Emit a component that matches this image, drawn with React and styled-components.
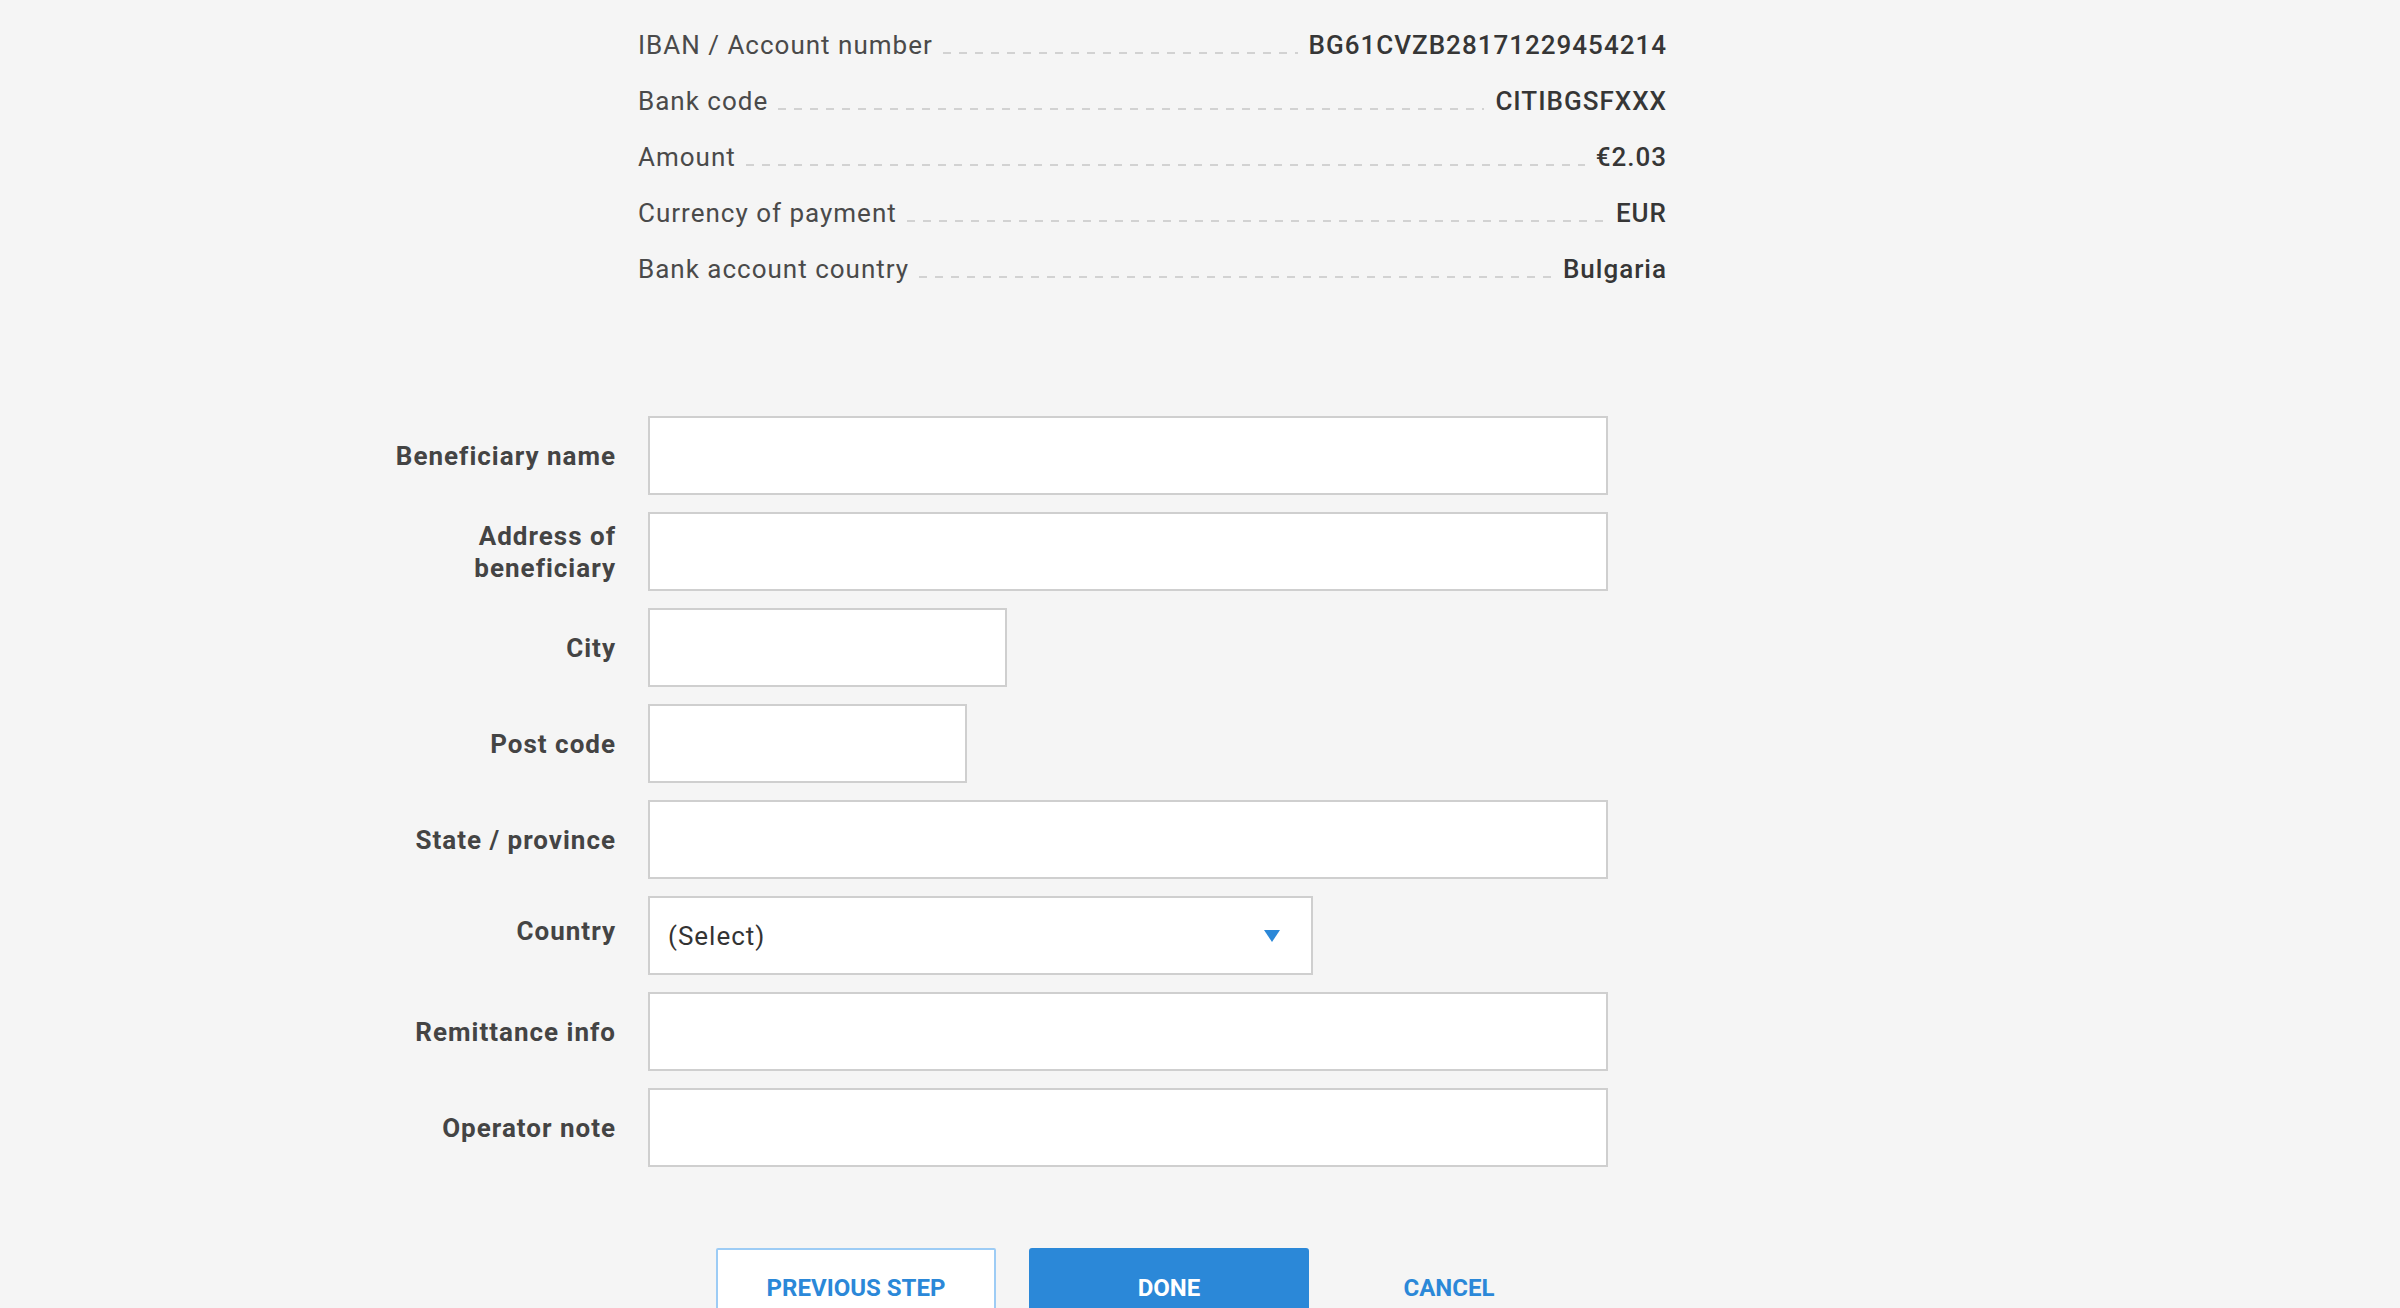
import React from 'react';
import styled, { createGlobalStyle } from 'styled-components';

const GlobalStyle = createGlobalStyle`
  html, body {
    margin: 0;
    padding: 0;
    background: #f5f5f5;
    overflow: hidden;
  }
  body {
    font-family: Roboto, "Noto Sans", "Liberation Sans", Arial, sans-serif;
    color: #444;
  }
  * { box-sizing: border-box; }
`;

const Page = styled.div`
  height: 1308px;
  padding: 17px 0 0 375px;
`;

const InfoList = styled.dl`
  margin: 0 0 0 263px;
  width: 1028px;
`;

const InfoRow = styled.div`
  display: flex;
  align-items: baseline;
  height: 56px;
  line-height: 56px;
  font-size: 26px;
  letter-spacing: 1px;
`;

const InfoLabel = styled.dt`
  margin: 0;
  color: #4a4a4a;
  white-space: nowrap;
`;

const Leader = styled.span`
  flex: 1;
  height: 2px;
  margin: 0 11px -1px 10px;
  background: repeating-linear-gradient(
    to right,
    #d2d2d2 0 8px,
    transparent 8px 16px
  );
`;

const InfoValue = styled.dd`
  margin: 0;
  font-weight: 500;
  color: #363636;
  white-space: nowrap;
  margin-right: -1px;
`;

const Form = styled.form`
  display: grid;
  grid-template-columns: 240px 960px;
  column-gap: 33px;
  row-gap: 17px;
  align-items: center;
  margin-top: 119px;
`;

const FieldLabel = styled.label`
  text-align: right;
  font-weight: 700;
  font-size: 26px;
  line-height: 32px;
  letter-spacing: 1px;
  margin-right: -1px;
  color: #444;
  margin-top: ${p => p.$shift || 0}px;
`;

const TextInput = styled.input`
  display: block;
  width: ${p => p.$w || 960}px;
  height: 79px;
  border: 2px solid #cfcfcf;
  border-radius: 0;
  background: #fff;
  padding: 0 18px;
  font: 400 26px Roboto, "Noto Sans", sans-serif;
  letter-spacing: 1px;
  color: #333;
  outline: none;
`;

const SelectBox = styled.div`
  position: relative;
  width: ${p => p.$w}px;
  height: 79px;
`;

const Select = styled.select`
  appearance: none;
  -webkit-appearance: none;
  width: 100%;
  height: 100%;
  border: 2px solid #cfcfcf;
  border-radius: 0;
  background: #fff;
  padding: 0 60px 0 18px;
  font: 400 26px Roboto, "Noto Sans", sans-serif;
  letter-spacing: 1px;
  color: #333;
  outline: none;
`;

const Arrow = styled.svg`
  position: absolute;
  right: 33px;
  top: 34px;
  pointer-events: none;
`;

const Actions = styled.div`
  display: flex;
  gap: 33px;
  margin: 81px 0 0 341px;
`;

const Button = styled.button`
  width: ${p => (p.$variant === 'text' ? 214 : 280)}px;
  height: 79px;
  font: 700 24px Roboto, "Noto Sans", sans-serif;
  text-transform: uppercase;
  letter-spacing: 0;
  cursor: pointer;
  padding: 0;
  border-radius: ${p => (p.$variant === 'primary' ? 3 : 2)}px;
  border: 2px solid
    ${p =>
      p.$variant === 'outline'
        ? '#9dccf5'
        : p.$variant === 'primary'
        ? '#2b88d8'
        : 'transparent'};
  background: ${p =>
    p.$variant === 'outline' ? '#fff' : p.$variant === 'primary' ? '#2b88d8' : 'transparent'};
  color: ${p => (p.$variant === 'primary' ? '#fff' : '#2b88d8')};
`;

const info = [
  ['IBAN / Account number', 'BG61CVZB28171229454214'],
  ['Bank code', 'CITIBGSFXXX'],
  ['Amount', '€2.03'],
  ['Currency of payment', 'EUR'],
  ['Bank account country', 'Bulgaria'],
];

export default function App() {
  return (
    <>
      <GlobalStyle />
      <Page>
        <InfoList>
          {info.map(([k, v]) => (
            <InfoRow key={k}>
              <InfoLabel>{k}</InfoLabel>
              <Leader />
              <InfoValue>{v}</InfoValue>
            </InfoRow>
          ))}
        </InfoList>

        <Form onSubmit={e => e.preventDefault()}>
          <FieldLabel htmlFor="bname">Beneficiary name</FieldLabel>
          <TextInput id="bname" />

          <FieldLabel htmlFor="baddr">Address of beneficiary</FieldLabel>
          <TextInput id="baddr" />

          <FieldLabel htmlFor="city">City</FieldLabel>
          <TextInput id="city" $w={359} />

          <FieldLabel htmlFor="post">Post code</FieldLabel>
          <TextInput id="post" $w={319} />

          <FieldLabel htmlFor="state">State / province</FieldLabel>
          <TextInput id="state" />

          <FieldLabel htmlFor="country" $shift={-10}>Country</FieldLabel>
          <SelectBox $w={665}>
            <Select id="country" defaultValue="">
              <option value="">(Select)</option>
            </Select>
            <Arrow width="16" height="12" viewBox="0 0 16 12">
              <path d="M0 0 H16 L8 12 Z" fill="#2b88d8" />
            </Arrow>
          </SelectBox>

          <FieldLabel htmlFor="remit">Remittance info</FieldLabel>
          <TextInput id="remit" />

          <FieldLabel htmlFor="note">Operator note</FieldLabel>
          <TextInput id="note" />
        </Form>

        <Actions>
          <Button type="button" $variant="outline">Previous step</Button>
          <Button type="button" $variant="primary">Done</Button>
          <Button type="button" $variant="text">Cancel</Button>
        </Actions>
      </Page>
    </>
  );
}
